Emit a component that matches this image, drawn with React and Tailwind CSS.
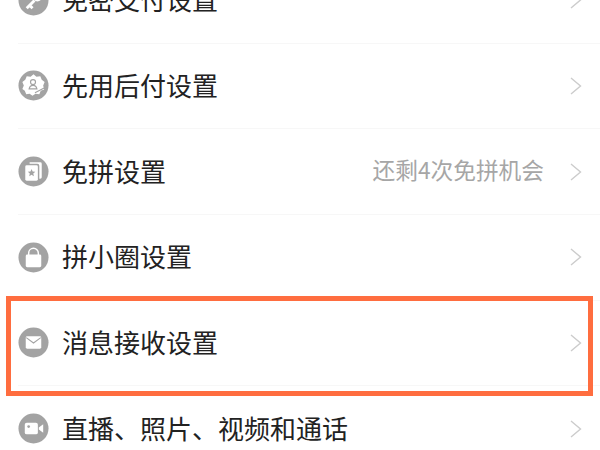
import React from 'react';

const IconKey = () => (
  <svg viewBox="0 0 32 32" className="w-full h-full">
    <circle cx="16" cy="16" r="15.5" fill="#a3a3a3" />
    <path d="M9 24 L17 16 M12 21 L15 24" stroke="#fff" strokeWidth="3" fill="none" />
    <circle cx="20" cy="12" r="5" fill="#fff" />
  </svg>
);

const IconBadge = () => (
  <svg viewBox="0 0 32 32" className="w-full h-full">
    <circle cx="16" cy="16" r="15.5" fill="#a3a3a3" />
    <path d="M16 4.5 L19 7 L23 6.5 L24.5 10 L27.5 12.5 L26 16 L27 20 L23.5 21.5 L22 25 L18 24.5 L15 26.5 L12 24.5 L8.5 25 L7 21.5 L4.5 19.5 L6 16 L4.5 12.5 L7.5 10 L9 6.5 L13 7 Z" fill="#fff" />
    <circle cx="15.5" cy="12.5" r="2.6" fill="none" stroke="#a3a3a3" strokeWidth="1.2" />
    <path d="M11.5 19.5 C12 16.8 13.8 15.8 15.5 15.8 C17.2 15.8 19 16.8 19.5 19.5 Z" fill="none" stroke="#a3a3a3" strokeWidth="1.2" />
    <path d="M17.5 23.5 L27 18.5" stroke="#a3a3a3" strokeWidth="1.2" />
  </svg>
);

const IconCards = () => (
  <svg viewBox="0 0 32 32" className="w-full h-full">
    <circle cx="16" cy="16" r="15.5" fill="#a3a3a3" />
    <path d="M12 6.5 H23 A1.5 1.5 0 0 1 24.5 8 V22 A1.5 1.5 0 0 1 23 23.5 H22 V10 A2 2 0 0 0 20 8 H12 Z" fill="#fff" />
    <rect x="7.5" y="9.5" width="13" height="16" rx="1.5" fill="#fff" />
    <path d="M14 13.5 L15.1 16.1 L17.9 16.3 L15.8 18.1 L16.4 20.8 L14 19.4 L11.6 20.8 L12.2 18.1 L10.1 16.3 L12.9 16.1 Z" fill="#a3a3a3" />
  </svg>
);

const IconLock = () => (
  <svg viewBox="0 0 32 32" className="w-full h-full">
    <circle cx="16" cy="16" r="15.5" fill="#a3a3a3" />
    <path d="M11 14 V11.5 A5 5 0 0 1 21 11.5 V14" fill="none" stroke="#fff" strokeWidth="1.5" />
    <rect x="8" y="13" width="16" height="13" rx="1.5" fill="#fff" />
  </svg>
);

const IconMail = () => (
  <svg viewBox="0 0 32 32" className="w-full h-full">
    <circle cx="16" cy="16" r="15.5" fill="#a3a3a3" />
    <rect x="8" y="9.5" width="16" height="13" rx="1.5" fill="#fff" />
    <path d="M8.5 11 L16 16.5 L23.5 11" fill="none" stroke="#a3a3a3" strokeWidth="1.1" />
  </svg>
);

const IconVideo = () => (
  <svg viewBox="0 0 32 32" className="w-full h-full">
    <circle cx="16" cy="16" r="15.5" fill="#a3a3a3" />
    <rect x="7" y="10" width="13.5" height="12" rx="2" fill="#fff" />
    <path d="M21.5 15 L26 11.5 V20.5 L21.5 17 Z" fill="#fff" />
    <circle cx="11" cy="14" r="1.4" fill="#a3a3a3" />
  </svg>
);

const Chevron = ({ className }) => (
  <svg viewBox="0 0 12 18" className={className}>
    <path d="M1 1 L10.5 9 L1 17" fill="none" stroke="#cccccc" strokeWidth="1.4" />
  </svg>
);

const rows = [
  { icon: <IconKey />, label: '免密支付设置' },
  { icon: <IconBadge />, label: '先用后付设置' },
  { icon: <IconCards />, label: '免拼设置', note: '还剩4次免拼机会' },
  { icon: <IconLock />, label: '拼小圈设置' },
  { icon: <IconMail />, label: '消息接收设置' },
  { icon: <IconVideo />, label: '直播、照片、视频和通话' },
];

const Row = ({ icon, label, note }) => (
  <div className="h-[85.7px] ml-[18px] flex items-center border-b-[1.5px] border-[#f7f7f7]">
    <div className="w-[31px] h-[31px] shrink-0">{icon}</div>
    <span className="ml-[13px] pb-[2px] text-[26px] leading-none text-[#222222]">{label}</span>
    {note && <span className="ml-auto pb-[2px] text-[22.7px] leading-none text-[#a6a6a6]">{note}</span>}
    <Chevron className={`w-[12px] h-[18px] mr-[18px] ${note ? 'ml-[26px]' : 'ml-auto'}`} />
  </div>
);

export default function App() {
  return (
    <div
      className="relative w-[600px] h-[450px] overflow-hidden bg-white"
      style={{ fontFamily: '"Noto Sans CJK SC", "Noto Sans", sans-serif' }}
    >
      <div className="-mt-[42.2px]">
        {rows.map((row) => (
          <Row key={row.label} {...row} />
        ))}
      </div>
      {/* highlight box over the message row */}
      <div className="absolute left-[6px] top-[296px] w-[587px] h-[100px] border-[5px] border-[#ff6d3f]" />
    </div>
  );
}
